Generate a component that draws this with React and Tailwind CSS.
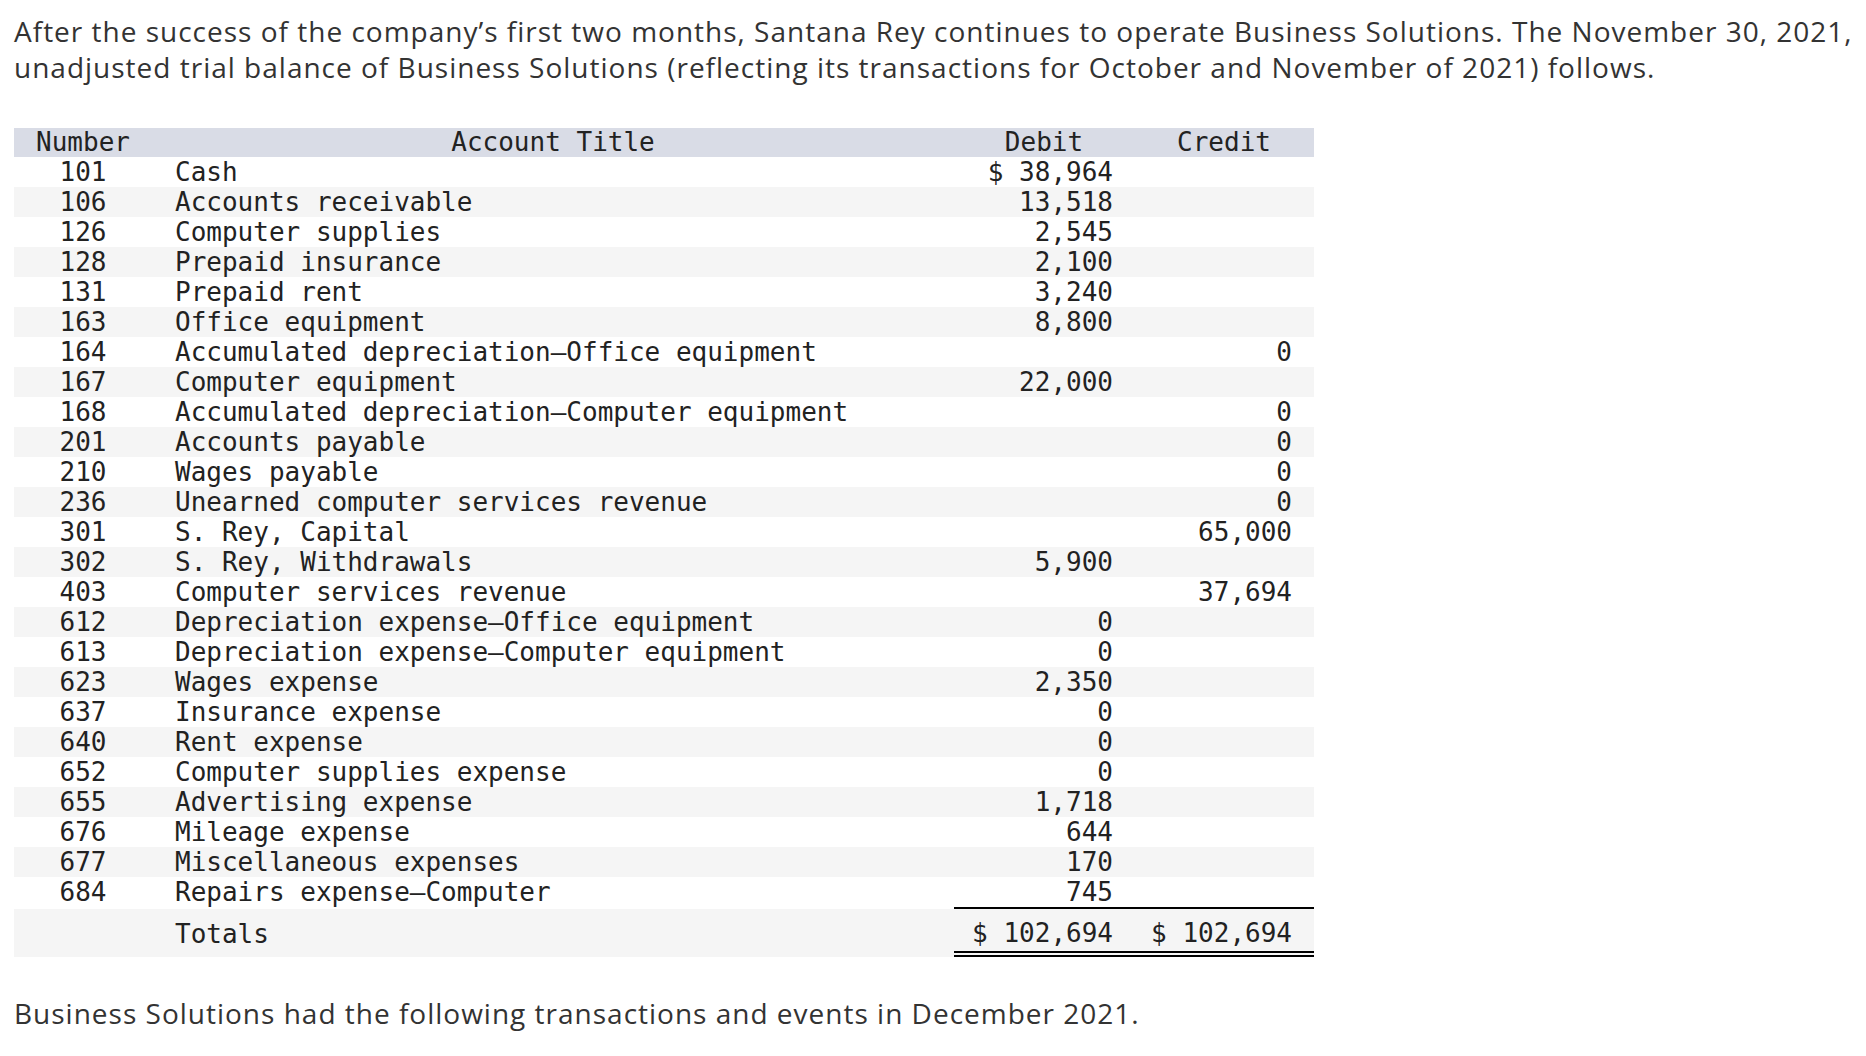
import React from "react";

const rows = [
  ["101", "Cash", "$ 38,964", ""],
  ["106", "Accounts receivable", "13,518", ""],
  ["126", "Computer supplies", "2,545", ""],
  ["128", "Prepaid insurance", "2,100", ""],
  ["131", "Prepaid rent", "3,240", ""],
  ["163", "Office equipment", "8,800", ""],
  ["164", "Accumulated depreciation\u2014Office equipment", "", "0"],
  ["167", "Computer equipment", "22,000", ""],
  ["168", "Accumulated depreciation\u2014Computer equipment", "", "0"],
  ["201", "Accounts payable", "", "0"],
  ["210", "Wages payable", "", "0"],
  ["236", "Unearned computer services revenue", "", "0"],
  ["301", "S. Rey, Capital", "", "65,000"],
  ["302", "S. Rey, Withdrawals", "5,900", ""],
  ["403", "Computer services revenue", "", "37,694"],
  ["612", "Depreciation expense\u2014Office equipment", "0", ""],
  ["613", "Depreciation expense\u2014Computer equipment", "0", ""],
  ["623", "Wages expense", "2,350", ""],
  ["637", "Insurance expense", "0", ""],
  ["640", "Rent expense", "0", ""],
  ["652", "Computer supplies expense", "0", ""],
  ["655", "Advertising expense", "1,718", ""],
  ["676", "Mileage expense", "644", ""],
  ["677", "Miscellaneous expenses", "170", ""],
  ["684", "Repairs expense\u2014Computer", "745", ""],
];

const mono = { fontFamily: '"DejaVu Sans Mono", "Liberation Mono", monospace' };

export default function App() {
  return (
    <div
      className="w-[1866px] h-[1056px] bg-white text-[#333] px-[14px] pt-[13px]"
      style={{ fontFamily: '"Open Sans", Lato, sans-serif' }}
    >
      <p className="text-[28px] leading-[36px] tracking-[1px] whitespace-nowrap">
        After the success of the company’s first two months, Santana Rey continues to operate Business Solutions. The November 30, 2021,
        <br />
        unadjusted trial balance of Business Solutions (reflecting its transactions for October and November of 2021) follows.
      </p>

      <div className="mt-[43px] w-[1300px] text-[26px] text-[#222]" style={mono}>
        {/* header */}
        <div className="flex h-[29px] items-center bg-[#d9dce6] leading-[29px]">
          <div className="w-[138px] text-center">Number</div>
          <div className="w-[802px] text-center">Account Title</div>
          <div className="w-[180px] text-center">Debit</div>
          <div className="w-[180px] text-center">Credit</div>
        </div>

        {rows.map(([num, title, debit, credit], i) => (
          <div
            key={num}
            className={
              "flex h-[30px] items-center leading-[30px] " +
              (i % 2 === 1 ? "bg-[#f5f5f5]" : "bg-white")
            }
          >
            <div className="w-[138px] text-center">{num}</div>
            <div className="w-[802px] pl-[23px] whitespace-pre">{title}</div>
            <div className="w-[180px] pr-[21px] text-right whitespace-pre">{debit}</div>
            <div className="w-[180px] pr-[22px] text-right whitespace-pre">{credit}</div>
          </div>
        ))}

        {/* totals */}
        <div className="flex h-[50px] bg-white leading-[30px]">
          <div className="w-[138px] border-t-2 border-white bg-[#f5f5f5]" />
          <div className="w-[802px] border-t-2 border-white bg-[#f5f5f5] pl-[23px] pt-[1px] flex items-center">
            Totals
          </div>
          <div className="w-[180px] border-t-2 border-solid border-black bg-[#f5f5f5] whitespace-pre">
            <div className="flex h-full w-full items-center justify-end pr-[21px] pt-[5px] border-b-[6px] border-double border-black">
              $ 102,694
            </div>
          </div>
          <div className="w-[180px] border-t-2 border-solid border-black bg-[#f5f5f5] whitespace-pre">
            <div className="flex h-full w-full items-center justify-end pr-[22px] pt-[5px] border-b-[6px] border-double border-black">
              $ 102,694
            </div>
          </div>
        </div>
      </div>

      <p className="mt-[38px] text-[28px] leading-[36px] tracking-[1px]">
        Business Solutions had the following transactions and events in December 2021.
      </p>
    </div>
  );
}
